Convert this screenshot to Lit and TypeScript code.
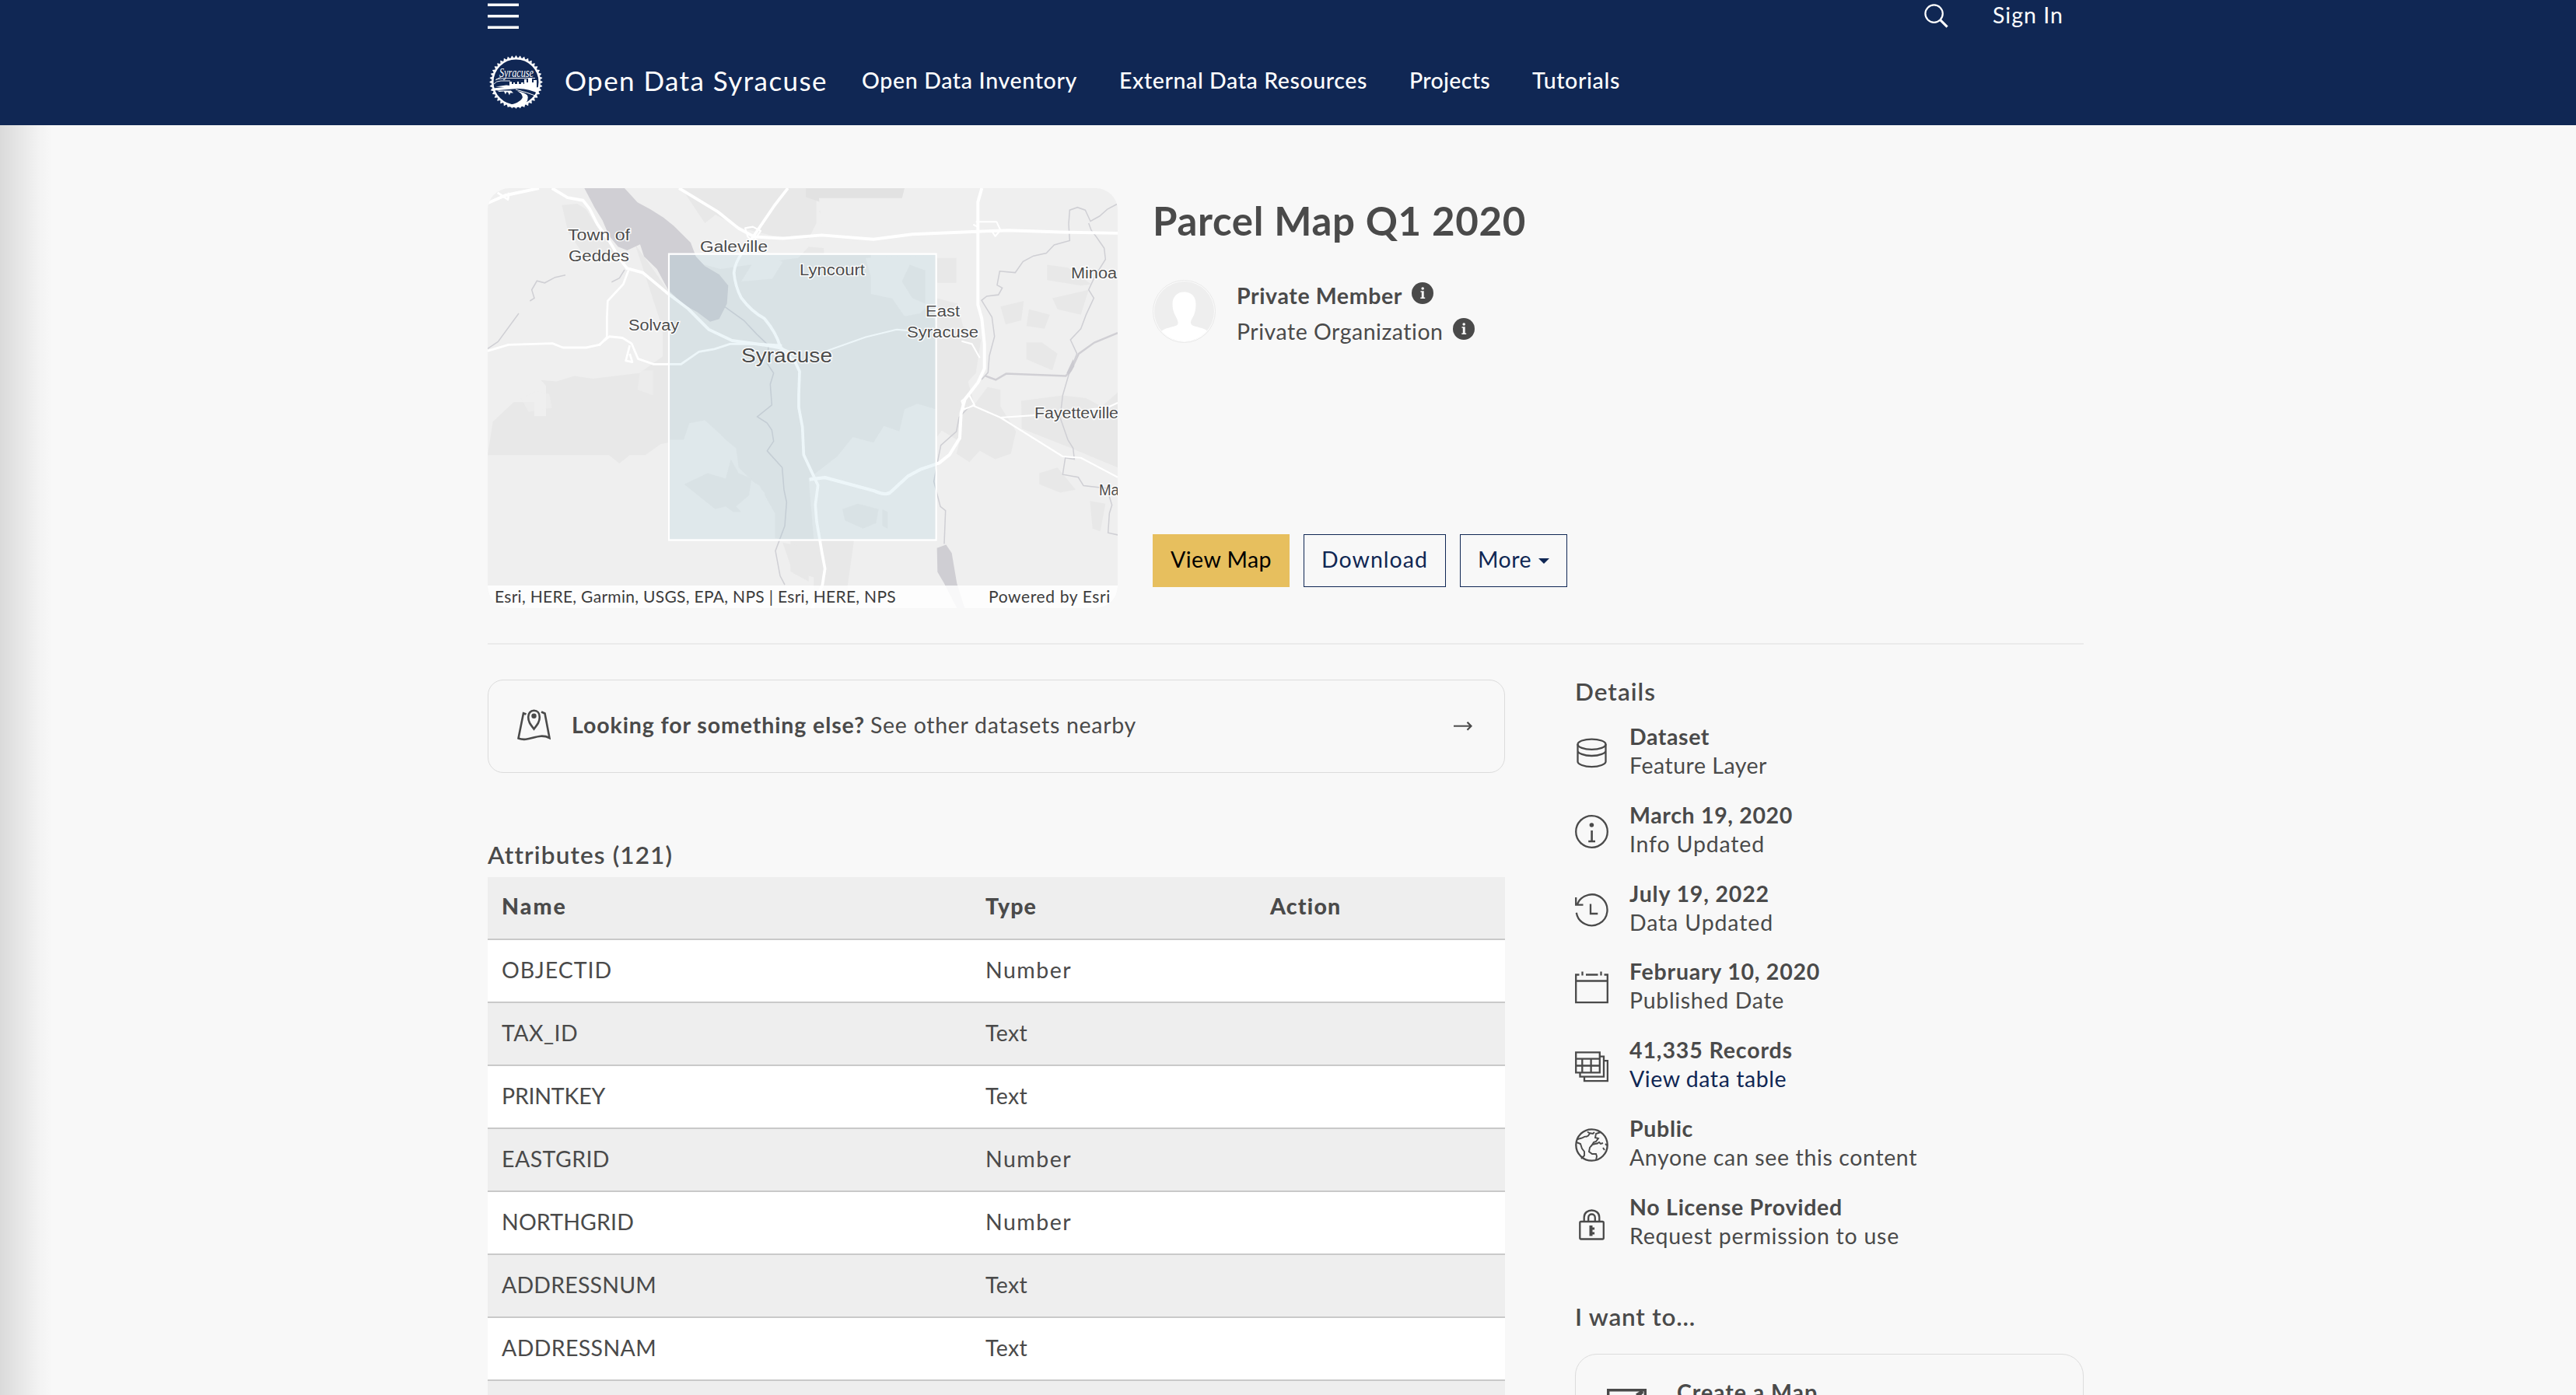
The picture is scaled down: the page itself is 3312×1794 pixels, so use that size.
import { LitElement, html, css, svg } from "lit";
import { customElement, property } from "lit/decorators.js";

/** Text run whose tracking is adjusted so that it fills a given advance width. */
@customElement("fit-text")
class FitText extends LitElement {
  @property({ type: Number }) w = 0;
  @property() text = "";

  static styles = css`
    :host { display: inline-block; white-space: pre; }
  `;

  firstUpdated() {
    const run = this.renderRoot.querySelector("span")!;
    const natural = run.getBoundingClientRect().width;
    const gaps = this.text.length;
    if (this.w > 0 && gaps > 0) {
      this.style.letterSpacing = `${((this.w - natural) / gaps).toFixed(3)}px`;
    }
  }

  render() {
    return html`<span>${this.text}</span>`;
  }
}

const fit = (text: string, w: number) => html`<fit-text .text=${text} .w=${w}></fit-text>`;

const hamburger = svg`<svg class="menu" viewBox="0 0 40 34" width="40" height="34">
  <path d="M0 2.2h40M0 16.7h40M0 31.2h40" stroke="#fff" stroke-width="3.4"/></svg>`;

const search = svg`<svg class="search" viewBox="0 0 31 31" width="31" height="31">
  <circle cx="12.6" cy="12.6" r="11.2" fill="none" stroke="#fff" stroke-width="2.2"/>
  <path d="M20.6 20.6l9 9" stroke="#fff" stroke-width="3"/></svg>`;

/* City seal: toothed ring, script name, skyline, hills and a winding creek */
const teeth = Array.from({ length: 40 }, (_, i) => {
  const a = (i / 40) * Math.PI * 2;
  const p = (r: number, o: number) =>
    `${(34.5 + r * Math.cos(a + o)).toFixed(2)} ${(34.5 + r * Math.sin(a + o)).toFixed(2)}`;
  return `M${p(31.2, -0.07)}L${p(34.4, 0)}L${p(31.2, 0.07)}Z`;
}).join("");

const seal = svg`<svg class="seal" viewBox="0 0 69 69" width="69" height="69">
  <path d="${teeth}" fill="#fff"/>
  <circle cx="34.5" cy="34.5" r="30.2" fill="none" stroke="#fff" stroke-width="2.4"/>
  <text x="13" y="28" font-family="Liberation Serif, serif" font-style="italic" font-size="16" textLength="44" lengthAdjust="spacingAndGlyphs" fill="#fff">Syracuse</text>
  <path d="M17 27q-6 3-9 5M9 31q10-2 20-1.500h30M6 37q3-4 9-4h12" fill="none" stroke="#fff" stroke-width=".9"/>
  <path d="M26 39v-5h3v3h2v-2h2v2h3v-3h2v3h3v-2h3v2h1v-6h3v4h2v-5h5v5h2v-3h4v10H38L8 40.500l14-2z" fill="#fff"/>
  <path d="M5 42.500q30-4 59-1l-1 8q-12-7-27-6.500L6 45.500z" fill="#fff"/>
  <path d="M10 45.500h18l3 3h-4l-1 3-2-4h-2l-1 3-2-4-6 .500z" fill="#fff"/>
  <path d="M34 44q15 4 28 9" fill="none" stroke="#fff" stroke-width="1"/>
  <path d="M36 46q9 5 6 10-3 5-16 8l-2 2q10 2.500 20-.500 8-9 5-14-4-4-13-5.500z" fill="#fff"/>
</svg>`;

const areaMap = svg`<svg class="map-art" viewBox="22 34 2430 1512" preserveAspectRatio="none" width="810" height="540">
  <rect x="22" y="34" width="2430" height="1512" fill="#efefef"/>
  <g fill="#e8e8e8">
    <path d="M540 34H1290V160L1260 215 1120 205 1010 180 900 130 860 160 770 34Z"/>
    <path d="M308 95l60-5 34 20 60 90 60 60-60 20-80-20-50-70z"/>
    <path d="M590 235l130 170v-130l200 50 300-40 40-40 120 10-80-140h200v300l200 40 140 160 60 200-60 130-70-40-90 60-120 60-100 110-60 400-120-10v-90l-90-20v-110l-60-10v-90l-60-100-110-60-60 80-90 0-60-60-20-80 20-40-60 10-60 40h-60l-40 30-40-30H22l20-120 80-70h80v50h45v-110l-20-20 60 5 70-20 70 10 180-20 90-60 0-100z"/>
    <path d="M1250 66l60 20 140-10 170-5 10-37H1250z" fill="#e2e2e2"/>
    <path d="M1755 285h75v90h-75zM1755 430l80 20 20 80 70 50-20 120-60 60-20 80-70 90z"/>
    <path d="M1870 850l80-100 50 10v60l60 90-20 80-60 20-60-30-40 40-50-30z"/>
    <path d="M2080 800l160-20 90 10 60 30 62-50v270l-180-70-190-70z"/>
    <path d="M2180 310l80 10 90 60-40 5-130-20zM2000 460l90-20-10 70-60 15zM2110 470l80 20-20 50-70-10zM2200 430l140-30-30 90-90-20zM2100 590l60 0 60 40-20 60-100-40z"/>
    <path d="M2150 1060l70-20 70 80-60 10-80-30zM2345 1160l60 10-20 100-30-10z"/>
    <path d="M1160 1310l100 20v120l-60-30z"/>
  </g>
  <g fill="#efefef">
    <path d="M150 790l60-25 50 10 10 50-90 15zM610 690h50v90l-60-20z" opacity=".6"/>
    <path d="M1000 370l40-60-30-40 60-10 90 40-40 60z"/>
    <path d="M1300 70h350v200h-330z"/>
    <path d="M1480 285l270-10v150l-60 60-60 10-60-80-60-30z"/>
    <path d="M800 880l60-10 60 50 60 60 10 70-60-20-40 60-100 20h-12v-170z"/>
    <path d="M1370 1000l60-70 80 20 40-60 60 20 20-80 50-20 70 20v470h-470l-20-220z"/>
    <path d="M720 940h60l80-60 120 90 10 70 100 90 20 130v40h-390z"/>
  </g>
  <g fill="#e8e8e8">
    <path d="M780 1100l90-40 70 20 20-70 30 50 50 20-10 60-50 40 20 20-30 0-30-20-40 10z"/>
    <path d="M1390 1190l60-20 80 20-10 50-50 20-70-30zM1545 1190l20 10v60l-20-10z"/>
    <path d="M1660 430l-40-60 30-60 60 20v120z"/>
  </g>
  <path d="M395 34L435 105 465 150 490 205 525 245 560 258 610 236 625 280 675 325 718 400 780 455 830 480 880 515 915 505 945 450 950 385 915 345 860 315 825 280 805 230 740 170 700 140 650 110 600 85 550 34Z" fill="#d0cfd4"/>
  <path d="M1755 1330l35-12 22 30 20 110 30 88h-30l-50-90-25-40z" fill="#cfced3"/>
  <g fill="none" stroke="#cfcfd4" stroke-width="4.500">
    <path d="M935 460L1010 510 1060 560 1105 600 1100 665 1125 700 1112 740 1118 815 1062 857 1100 880 1118 905 1125 945 1100 980 1158 1040 1165 1120 1175 1165 1168 1250 1132 1340 1150 1430 1168 1462"/>
    <path d="M185 440l17-10-10-30 20-32 30 7 40-20 40-8M22 612l40-25 80-102M500 372l30-14 20-30"/>
    <path d="M2452 90l-40 20-30 25-35 18-20-40-30-10-30 10-4 50 4 60-20 5-40 10-30 30-50 10-40 20-30 40-60-5-10 50 20 10-15 25-45 5-20 15 40 60 10 70-20 70-5 60-25 25"/>
    <path d="M2340 160l10 25 20 25 30 40 5 40-40 60-25 50 20 30-30 60-20 50-40 40 25 50-30 70-25 80-10 80 30 80 20 30 5 40-35-5-10 60 60 10 20 30 90 10 20 60-10 30-5 70 50 10"/>
    <path d="M1880 820l-40 40-10 50-60 50-15 70-12 60 25 90 20 15-5 120"/>
  </g>
  <path d="M1942 710l40 14 40-22 230 8 20-20 30-60 60-40 90-35" fill="none" stroke="#d0cfd4" stroke-width="7"/>
  <path d="M2255 700l25-50 5 25-20 30z" fill="#cbcad0"/>
  <g fill="none" stroke="#fff" stroke-linejoin="round">
    <path d="M22 88L90 60 220 34M270 34l60 34 60 10 25 30 30 55 45 60 45 70 25 30 60 15 90 70 85 60 80 75 90 40 120 15 60 10 60 25" stroke-width="11"/>
    <path d="M22 620l80-22 170-5 40 15h90l50-10 40-30 50 5 35 20 25 55 60 20h105l70-45 60-10 60-18 120 0 80 5" stroke-width="8"/>
    <path d="M565 330l-20 50-60 60-3 60v70l-30 30M570 600l-15 55 25 5-10-30M60 50l40 25 5-25" stroke-width="8"/>
    <path d="M760 34l150 85 80 60 60 30 110 6 150-12 200 15 150-18 250-10 120-4 200 6 222 4" stroke-width="11"/>
    <path d="M1180 34l-50 60-80 110-45 60q-30 40-33 75 5 50 28 90 40 50 90 75 45 50 60 100l60 60 15 30-3 80 0 50 14 70 5 100 40 80 15 30-10 70 5 60 20 110 12 60-10 60-30 60-20 60" stroke-width="11"/>
    <path d="M1015 178l30-5 30 15-30 40-20-20zM1905 155l80 0 15 30-20 22-15-20M1895 165l20 10" stroke-width="6"/>
    <path d="M1928 34l-15 50v370l15 50 10 90 0 90-25 50-50 60-15 50-5 90-40 60-40 30-70 22-50 25-70 60q-20 10-60-7l-190-48-60 7" stroke-width="12"/>
    <path d="M1330 620l150-50 120-27 60 5M1850 585l40 10 30 50M1850 800l30-20 20 35-40 15zM1890 815l110 45 240 140 70 5 142 70M2000 860l160-10M2350 830l60-5 42-18" stroke-width="6"/>
  </g>
  <rect x="721" y="271" width="1031" height="1030" fill="rgba(130,190,215,.145)"/>
  <rect x="721" y="271" width="1031" height="1030" fill="none" stroke="#fff" stroke-width="6.500"/>
</svg>`;

type Label = [text: string, x: number, y: number, width: number, size?: number];
const labels: Label[] = [
  ["Town of", 103, 67, 80], ["Geddes", 104, 94, 78], ["Galeville", 273, 82, 87],
  ["Lyncourt", 401, 112, 84], ["Solvay", 181, 183, 65], ["East", 563, 164.600, 44],
  ["Syracuse", 539, 192, 92], ["Minoa", 750, 116, 59], ["Fayetteville", 703, 296, 108],
  ["Ma", 786, 395, 26], ["Syracuse", 326, 223.600, 117, 26],
];
const mapLabels = svg`<svg class="map-labels" viewBox="0 0 810 540" width="810" height="540">
  ${labels.map(([t, x, y, w, s]) => svg`<text x=${x} y=${y} textLength=${w} lengthAdjust="spacingAndGlyphs" font-size=${s ?? 20}>${t}</text>`)}
</svg>`;

const avatar = svg`<svg class="avatar" viewBox="0 0 81 81" width="81" height="81">
  <defs><clipPath id="face"><circle cx="40.500" cy="40.500" r="38.500"/></clipPath></defs>
  <circle cx="40.500" cy="40.500" r="40" fill="#fbfbfb" stroke="#e9e9e9"/>
  <circle cx="40.500" cy="40.500" r="38.500" fill="#eee"/>
  <path clip-path="url(#face)" d="M40.500 15.500c9 0 15 6 15 15.500 0 9-2 14-5 19-2 3.500-2 6 0 8 4 3 17 3 21 9v16h-61V67c4-6 17-6 21-9 2-2 1-5-.500-8.500-3-6-5.500-10-5.500-18.500 0-9.500 6-15.500 15-15.500z" fill="#fff"/>
</svg>`;

const infoBadge = svg`<svg class="badge" viewBox="0 0 28 28" width="28" height="28">
  <circle cx="14" cy="14" r="14" fill="#4a4a4a"/>
  <path d="M11.500 11.300h4.200v8.200h1.500v1.500h-5.900v-1.500h1.500v-6.700h-1.300z" fill="#f8f8f8"/>
  <circle cx="14.200" cy="8" r="1.800" fill="#f8f8f8"/></svg>`;

const icon = (body: unknown) => svg`<svg class="icon" viewBox="0 0 43 43" width="43" height="43"
  fill="none" stroke="#4a4a4a" stroke-width="2.300">${body}</svg>`;

const nearby = icon(svg`<path d="M11.500 7.500L8 6.200 1.500 38.500c14 5.500 25-8 40-.500L35.500 6.500 31 4.500" stroke-width="2.600"/>
  <path d="M21.500 26.500c-5-6.500-7.300-9.500-7.300-15.300 0-5 2.800-8.500 7.300-8.500s7.300 3.500 7.300 8.500c0 5.800-2.300 8.800-7.300 15.300z" stroke-width="2.600"/>
  <circle cx="21.500" cy="9.800" r="3.200" fill="#4a4a4a" stroke="none"/>`);

const arrow = svg`<svg viewBox="0 0 24 12" width="24" height="12" fill="none" stroke="#4a4a4a" stroke-width="2">
  <path d="M0 5.700h22"/><path d="M17.500 .700l5 5-5 5" stroke-width="2.200"/></svg>`;

const icons = {
  dataset: icon(svg`<ellipse cx="21.500" cy="10.200" rx="18" ry="6.600"/><path d="M3.500 10v22.500c0 3.200 8 6.600 18 6.600s18-3.400 18-6.600V10M3.500 18.400c0 3.200 8 6.600 18 6.600s18-3.400 18-6.600"/>`),
  info: icon(svg`<circle cx="21.500" cy="21.500" r="20.300"/><circle cx="21.400" cy="13" r="2.800" fill="#4a4a4a" stroke="none"/><path d="M21.600 20v14M17.200 34h8.800" stroke-width="2.600"/>`),
  history: icon(svg`<path d="M3.100 13.500A20 20 0 1 1 1.800 24.700M1.200 5v9.600h9.300M20 13.500v12.500h9.300"/>`),
  calendar: icon(svg`<path d="M5.500 4.500H1.200v35.600h40.600V4.500h-4.300M14 4.500h15.500M1.200 12.500h40.600M9.500 .400v5M33.500 .400v5"/>`),
  table: icon(svg`<path d="M1.200 3.300h30.600v26H1.200zM1.200 11.600h30.600M1.200 20.500h30.600M9.300 11.600v17.700M20.600 11.600v17.700M32 8.600h5v26H6.500v-5M37 14.200h4.900v26H12v-5.500"/>`),
  globe: icon(svg`<circle cx="21.500" cy="21.500" r="20.200"/><path d="M3 14.500c3-2 5-1 8-3s3 .500 6-2l2-3-3-2M18 6l5 1 2-2M33 5l-6 2-1 5 4 1-3 4-3 1-3 5M30 19l-4 1-4 1-3 4-1 5 4 3h5l1 3-1 5M28 20l3-2 2 2 3-1M2 18l5 2 2 6 3 4v5l-4 4M36 25l2 3M39 20l2 2" stroke-width="1.900"/>`),
  lock: icon(svg`<rect x="6.300" y="19" width="30.500" height="22.500" rx="1.500"/><path d="M11.700 19v-5.500c0-12 19.600-12 19.600 0V19M17.200 19v-5c0-6 8.600-6 8.600 0v5"/><path d="M18.500 24h4v2.500h2.600v3h-2.600v3h2.600v3h-2.600v2h-4z" fill="#4a4a4a" stroke="none"/>`),
};

const createIcon = svg`<svg class="create-icon" viewBox="0 0 51 43" width="51" height="43" fill="none" stroke="#4a4a4a" stroke-width="3.400">
  <path d="M1.700 43V1.700h47.600V43M36 14L46 4M38 8l8-5"/></svg>`;

type Detail = [icon: unknown, title: string, titleW: number, sub: string, subW: number, link?: boolean];
const details: Detail[] = [
  [icons.dataset, "Dataset", 103, "Feature Layer", 177],
  [icons.info, "March 19, 2020", 210, "Info Updated", 174],
  [icons.history, "July 19, 2022", 180, "Data Updated", 185],
  [icons.calendar, "February 10, 2020", 245, "Published Date", 199],
  [icons.table, "41,335 Records", 210, "View data table", 202, true],
  [icons.globe, "Public", 82, "Anyone can see this content", 370],
  [icons.lock, "No License Provided", 274, "Request permission to use", 347],
];

type Row = [name: string, width: number, type: string, typeWidth: number];
const rows: Row[] = [
  ["OBJECTID", 142, "Number", 111], ["TAX_ID", 98, "Text", 54], ["PRINTKEY", 133, "Text", 54],
  ["EASTGRID", 139, "Number", 111], ["NORTHGRID", 170, "Number", 111],
  ["ADDRESSNUM", 199, "Text", 54], ["ADDRESSNAM", 199, "Text", 54], ["", 0, "", 0],
];

@customElement("app-root")
class AppRoot extends LitElement {
  static styles = css`
    :host {
      display: block; position: relative; width: 3312px; height: 1794px; overflow: hidden;
      background: #f8f8f8; color: #4a4a4a;
      font: 400 28.500px/36px Lato, "Open Sans", sans-serif;
    }
    * { box-sizing: border-box; }
    svg { display: block; flex: none; }
    .edge {
      position: absolute; inset: 161px auto 0 0; width: 68px;
      background: linear-gradient(90deg, rgba(0,0,0,.12), rgba(0,0,0,.065) 40%, rgba(0,0,0,.02) 75%, transparent);
    }
    header { height: 161px; background: #102754; color: #fff; padding: 0 633px 0 627px; }
    .top { display: flex; height: 45px; align-items: flex-start; }
    .menu { margin-top: 4px; }
    .search { margin: 5px 57px 0 auto; }
    .signin { margin: 1px 26px 0 0; }
    .brandbar { display: flex; height: 116px; align-items: center; }
    .seal { margin: 4px 28px 0 2px; }
    .brand { font-size: 35px; line-height: 40px; margin-right: 44px; }
    nav { display: flex; gap: 54px; font-weight: 500; }
    main { padding: 81px 633px 0 627px; }
    .hero { display: flex; gap: 45px; height: 540px; }
    .map { position: relative; width: 810px; height: 540px; border-radius: 28px; overflow: hidden; flex: none; }
    .map-labels {
      position: absolute; inset: 0; font-family: "Liberation Sans", Arial, sans-serif; fill: #4c4c4c;
      stroke: #fff; stroke-width: 2.500px; paint-order: stroke;
    }
    .credit {
      position: absolute; inset: auto 0 0 0; height: 29px; padding: 0 9px; background: rgba(255,255,255,.85);
      display: flex; justify-content: space-between; font-size: 21px; line-height: 27px; color: #3c3c3c;
    }
    .summary { flex: 1; display: flex; flex-direction: column; padding: 12px 0 27px; }
    h1 { margin: 0; font-size: 51px; line-height: 60px; font-weight: 700; }
    .owner { display: flex; gap: 27px; margin-top: 46px; height: 81px; align-items: center; }
    .owner-lines { margin-top: 4px; line-height: 46px; }
    .owner-line { display: flex; align-items: center; gap: 12px; height: 46px; }
    .badge { margin-bottom: 5px; }
    .strong { font-weight: 700; }
    .actions { display: flex; gap: 18px; margin-top: auto; }
    .btn {
      height: 68px; border: 1.500px solid #102754; color: #102754; display: flex; align-items: center;
      justify-content: center; gap: 9px; padding-bottom: 4px;
    }
    .view { width: 176px; background: #e7bf5e; border-color: #e7bf5e; color: #000; }
    .download { width: 183px; }
    .more { width: 138px; }
    .caret { border: 7px solid transparent; border-top-color: #102754; border-bottom: 0; margin-top: 5px; }
    hr { margin: 45px 0 0; border: 0; height: 2px; background: #ebebeb; }
    .columns { display: flex; gap: 90px; }
    .left { width: 1308px; }
    .nearby {
      margin-top: 45px; height: 120px; border: 1px solid #dcdcdc; border-radius: 20px;
      display: flex; align-items: center; padding: 0 41px 0 37px;
    }
    .nearby .icon { margin-bottom: 3px; }
    .nearby-text { margin-left: 27px; padding-bottom: 4px; flex: 1; display: flex; gap: 7px; }
    h2 { margin: 0; font-size: 31.500px; line-height: 40px; font-weight: 600; }
    .attrs { margin-top: 84.500px; }
    .table { margin-top: 9.500px; }
    .row {
      display: grid; grid-template-columns: 622px 366px 320px; height: 81px; align-items: center;
      border-bottom: 2px solid #c9c9c9; background: #fff; padding-bottom: 3px;
    }
    .row.alt { background: #eee; }
    .row.head { background: #eee; font-weight: 900; padding-bottom: 5px; }
    .cell { padding-left: 18px; }
    .right { width: 654px; }
    .details-title { margin-top: 39.500px; }
    .list { display: flex; flex-direction: column; gap: 26.830px; margin-top: 20.400px; line-height: 37px; }
    .item { display: flex; gap: 27px; align-items: center; height: 74px; }
    .item .icon { margin-top: 5px; }
    .lines { display: flex; flex-direction: column; align-items: flex-start; }
    .link { color: #102754; }
    .want { margin-top: 64.800px; }
    .card {
      margin-top: 28px; height: 200px; border: 1px solid #dcdcdc; border-radius: 28px;
      padding: 30px 40px; display: flex; gap: 39px;
    }
    .create-icon { margin-top: 14px; }
  `;

  render() {
    return html`
      <header>
        <div class="top">${hamburger}${search}<div class="signin">${fit("Sign In", 91)}</div></div>
        <div class="brandbar">
          ${seal}
          <div class="brand">${fit("Open Data Syracuse", 338)}</div>
          <nav>
            ${fit("Open Data Inventory", 277)}${fit("External Data Resources", 319)}
            ${fit("Projects", 104)}${fit("Tutorials", 113)}
          </nav>
        </div>
      </header>
      <main>
        <section class="hero">
          <div class="map">
            ${areaMap}${mapLabels}
            <div class="credit">
              ${fit("Esri, HERE, Garmin, USGS, EPA, NPS | Esri, HERE, NPS", 516)}
              ${fit("Powered by Esri", 157)}
            </div>
          </div>
          <div class="summary">
            <h1>${fit("Parcel Map Q1 2020", 480)}</h1>
            <div class="owner">
              ${avatar}
              <div class="owner-lines">
                <div class="owner-line"><span class="strong">${fit("Private Member", 213)}</span>${infoBadge}</div>
                <div class="owner-line">${fit("Private Organization", 266)}${infoBadge}</div>
              </div>
            </div>
            <div class="actions">
              <div class="btn view">${fit("View Map", 130)}</div>
              <div class="btn download">${fit("Download", 137)}</div>
              <div class="btn more">${fit("More", 69)}<span class="caret"></span></div>
            </div>
          </div>
        </section>
        <hr />
        <section class="columns">
          <div class="left">
            <div class="nearby">
              ${nearby}
              <div class="nearby-text">
                <span class="strong">${fit("Looking for something else?", 377)}</span>${fit("See other datasets nearby", 342)}
              </div>
              ${arrow}
            </div>
            <h2 class="attrs">${fit("Attributes (121)", 237)}</h2>
            <div class="table">
              <div class="row head">
                <div class="cell">${fit("Name", 84)}</div><div class="cell">${fit("Type", 66)}</div>
                <div class="cell">${fit("Action", 92)}</div>
              </div>
              ${rows.map(([name, w, type, tw], i) => html`
                <div class="row ${i % 2 ? "alt" : ""}">
                  <div class="cell">${fit(name, w)}</div><div class="cell">${fit(type, tw)}</div>
                </div>`)}
            </div>
          </div>
          <aside class="right">
            <h2 class="details-title">${fit("Details", 104)}</h2>
            <div class="list">
              ${details.map(([ic, title, w, sub, sw, link]) => html`
                <div class="item">
                  ${ic}
                  <div class="lines">
                    <span class="strong">${fit(title, w)}</span>
                    <span class=${link ? "link" : ""}>${fit(sub, sw)}</span>
                  </div>
                </div>`)}
            </div>
            <h2 class="want">${fit("I want to...", 155)}</h2>
            <div class="card">${createIcon}<span class="strong">${fit("Create a Map", 181)}</span></div>
          </aside>
        </section>
      </main>
      <div class="edge"></div>
    `;
  }
}
